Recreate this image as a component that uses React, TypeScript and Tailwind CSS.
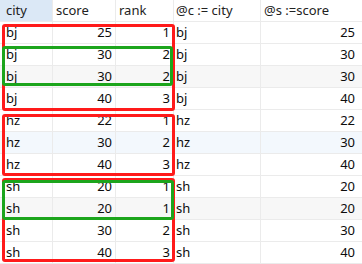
import React from "react";

const rows = [
  { city: "bj", score: 25, rank: 1, bg: "bg-white" },
  { city: "bj", score: 30, rank: 2, bg: "bg-white" },
  { city: "bj", score: 30, rank: 2, bg: "bg-[#f7f7f7]" },
  { city: "bj", score: 40, rank: 3, bg: "bg-white" },
  { city: "hz", score: 22, rank: 1, bg: "bg-white" },
  { city: "hz", score: 30, rank: 2, bg: "bg-[#f3f8fd]" },
  { city: "hz", score: 40, rank: 3, bg: "bg-white" },
  { city: "sh", score: 20, rank: 1, bg: "bg-white" },
  { city: "sh", score: 20, rank: 1, bg: "bg-[#f7f7f7]" },
  { city: "sh", score: 30, rank: 2, bg: "bg-white" },
  { city: "sh", score: 40, rank: 3, bg: "bg-white" },
];

const cell = "h-[22px] border-r border-b border-[#ebebeb] flex items-center overflow-hidden whitespace-nowrap";

export default function App() {
  return (
    <div
      className="relative w-[362px] h-[264px] overflow-hidden bg-white text-[13px] text-[#0d0d0d]"
      style={{ fontFamily: '"Noto Sans", "Open Sans", sans-serif' }}
    >
      <div className="grid grid-cols-[53px_63px_58px_87px_101px]">
        <div className={`${cell} bg-[#dbe8f6] pl-[6px] text-[#222]`}>city</div>
        <div className={`${cell} pl-[3px] text-[#222]`}>score</div>
        <div className={`${cell} pl-[3px] text-[#222]`}>rank</div>
        <div className={`${cell} pl-[2px] text-[#222]`}>@c := city</div>
        <div className={`${cell} pl-[3px] text-[#222] border-r-0`}>@s :=score</div>

        {rows.map((r, i) => (
          <React.Fragment key={i}>
            <div className={`${cell} ${r.bg} pl-[6px]`}>{r.city}</div>
            <div className={`${cell} ${r.bg} justify-end pr-[3px]`}>{r.score}</div>
            <div className={`${cell} ${r.bg} justify-end pr-[3px]`}>{r.rank}</div>
            <div className={`${cell} ${r.bg} pl-[2px]`}>{r.city}</div>
            <div className={`${cell} ${r.bg} justify-end pr-[7px] border-r-0`}>{r.score}</div>
          </React.Fragment>
        ))}
      </div>

      {/* annotation boxes */}
      <div className="absolute left-[2px] top-[24px] w-[173px] h-[87px] border-[3px] border-[#ff1a1a] rounded-[3px]" />
      <div className="absolute left-[2px] top-[114px] w-[173px] h-[62px] border-[3px] border-[#ff1a1a] rounded-[3px]" />
      <div className="absolute left-[2px] top-[178px] w-[173px] h-[84px] border-[3px] border-[#ff1a1a] rounded-[3px]" />
      <div className="absolute left-[2px] top-[46px] w-[171px] h-[40px] border-[3px] border-[#1ca51c] rounded-[3px]" />
      <div className="absolute left-[2px] top-[180px] w-[172px] h-[40px] border-[3px] border-[#1ca51c] rounded-[3px]" />
    </div>
  );
}
